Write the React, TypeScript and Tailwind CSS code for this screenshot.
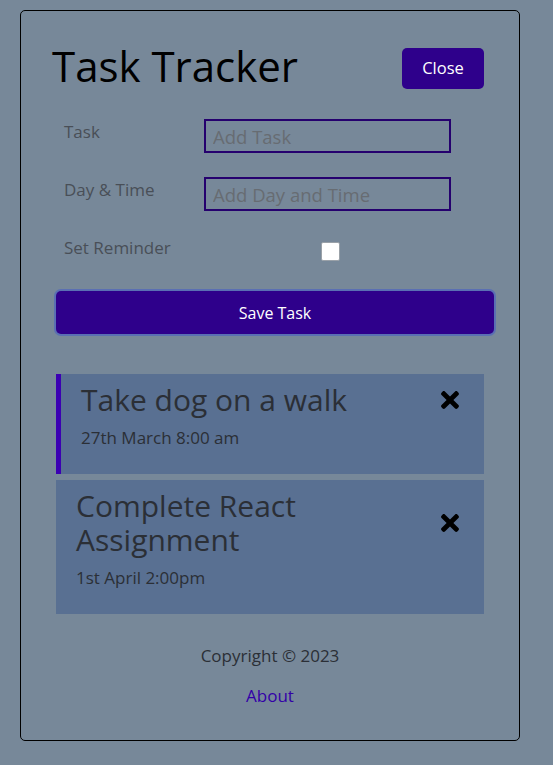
import { FaTimes } from "react-icons/fa";

const TASKS = [
  { id: 1, text: "Take dog on a walk", day: "27th March 8:00 am", reminder: true },
  { id: 2, text: "Complete React Assignment", day: "1st April 2:00pm", reminder: false },
];

const font = { fontFamily: '"Open Sans", "Liberation Sans", sans-serif' };

export default function App() {
  return (
    <div className="min-h-[765px] bg-[#778899] pt-[10px] pb-[25px]" style={font}>
      <div className="ml-[20px] w-[500px] h-[731px] border border-black rounded-[5px] px-[30px] pt-[29px]">
        {/* Header */}
        <header className="flex items-center justify-between">
          <h1 className="text-[42px] leading-[60px] font-normal text-black pl-[1px] -mt-[4px]">
            Task Tracker
          </h1>
          <button className="m-[5px] h-[41px] w-[82px] rounded-[5px] bg-[#2e008b] text-white text-[16.5px]">
            Close
          </button>
        </header>

        {/* Add form */}
        <form className="pt-[23px] mb-[40px]">
          <div className="flex items-center h-[34px]">
            <label className="w-[153px] pl-[13px] text-[17px] text-[#494f57] -mt-[9px]">Task</label>
            <input
              placeholder="Add Task"
              className="w-[247px] h-[34px] border-2 border-[#25006e] px-[7px] text-[18.5px] bg-transparent placeholder:text-[#676c72] outline-none"
            />
          </div>
          <div className="flex items-center h-[34px] mt-[24px]">
            <label className="w-[153px] pl-[13px] text-[17px] text-[#494f57] -mt-[9px]">Day &amp; Time</label>
            <input
              placeholder="Add Day and Time"
              className="w-[247px] h-[34px] border-2 border-[#25006e] px-[7px] text-[18.5px] bg-transparent placeholder:text-[#676c72] outline-none"
            />
          </div>
          <div className="flex items-center h-[34px] mt-[24px]">
            <label className="w-[270px] pl-[13px] text-[17px] text-[#494f57] -mt-[9px]">Set Reminder</label>
            <input
              type="checkbox"
              className="appearance-none w-[19px] h-[19px] bg-white border border-[#9aa1a8] rounded-[2px] -mt-[1px]"
            />
          </div>
          <button
            type="button"
            className="mt-[22px] ml-[5px] w-full h-[43px] rounded-[5px] bg-[#2e008b] text-white text-[16px] ring-2 ring-[#5a6fb3]"
          >
            Save Task
          </button>
        </form>

        {/* Tasks */}
        <div className="flex flex-col gap-[6px]">
          {TASKS.map((task) => (
            <div
              key={task.id}
              className={`mx-[5px] bg-[#597092] px-[20px] pt-[9px] ${
                task.reminder ? "border-l-[5px] border-[#3b00b3] h-[100px]" : "h-[134px]"
              }`}
            >
              <h3 className="flex items-center justify-between text-[30px] leading-[34px] text-[#2b2f36] font-normal">
                <span className="max-w-[320px]">{task.text}</span>
                <FaTimes className="text-black mr-[1px] shrink-0" size={26} />
              </h3>
              <p className="mt-[8px] text-[17px] text-[#2b2f36]">{task.day}</p>
            </div>
          ))}
        </div>

        {/* Footer */}
        <footer className="mt-[29px] flex flex-col items-center text-[17px]">
          <p className="text-[#2b2f36]">Copyright © 2023</p>
          <a href="#" className="mt-[14px] text-[#3300a8]">
            About
          </a>
        </footer>
      </div>
    </div>
  );
}
